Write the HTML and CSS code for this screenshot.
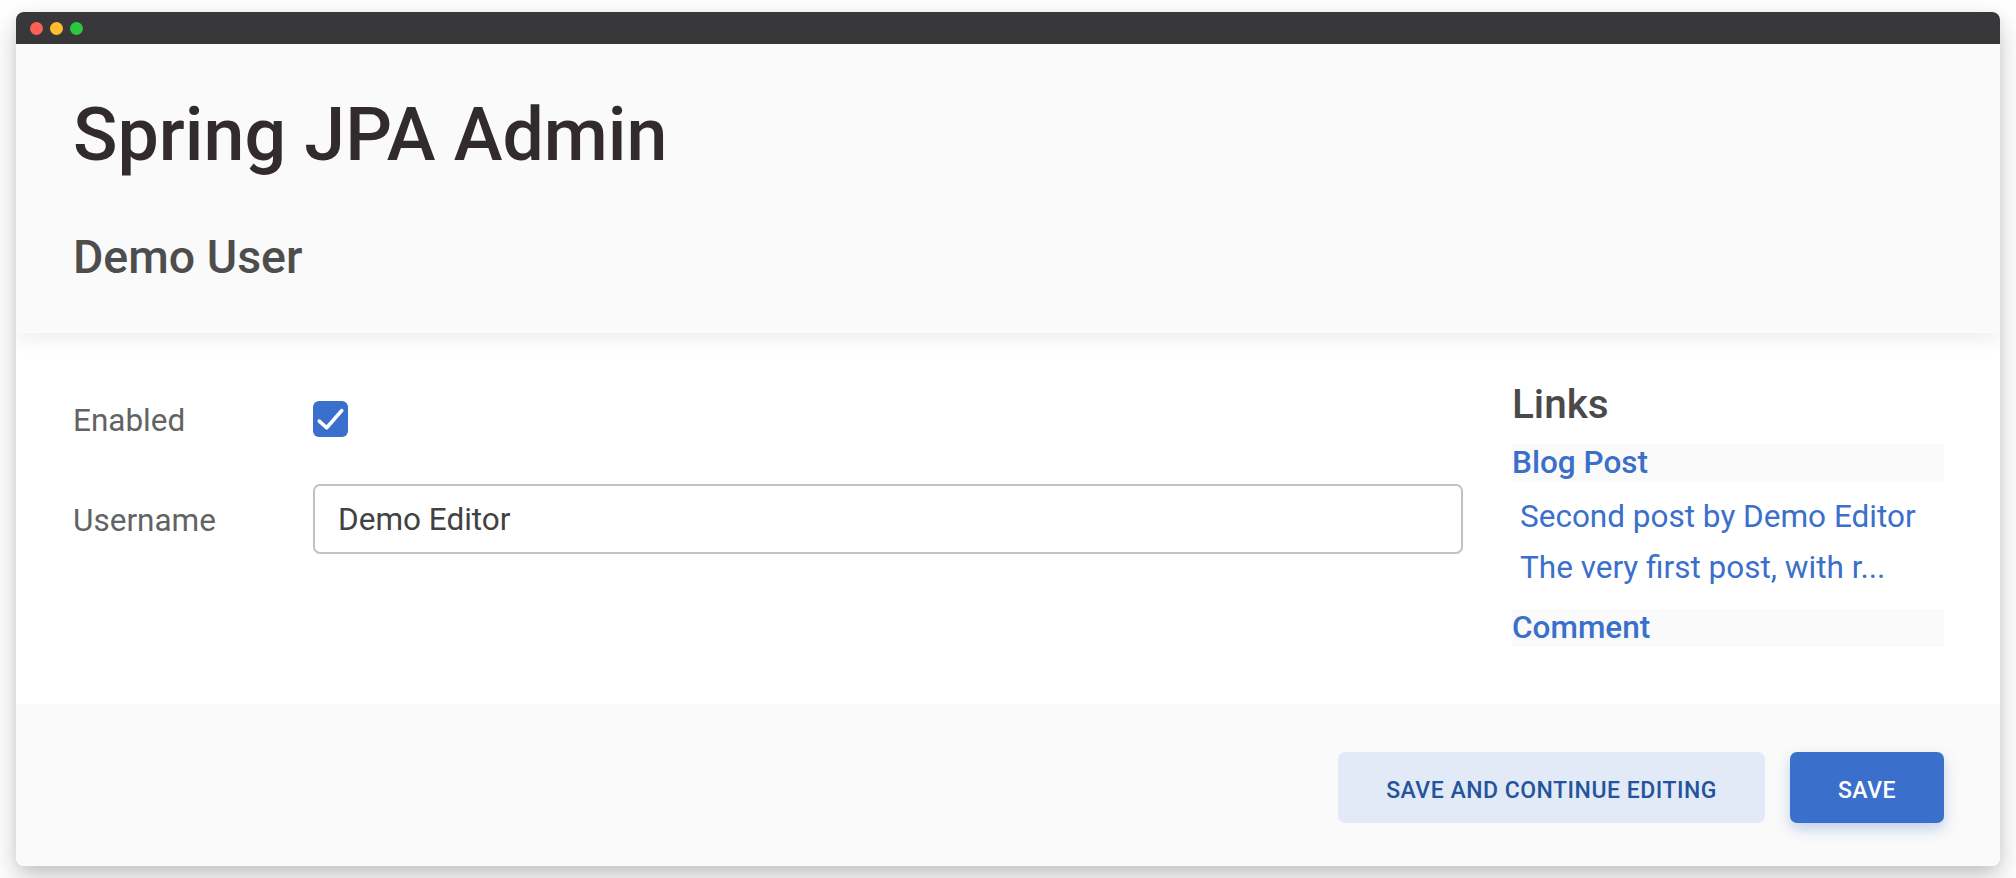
FILE: index.html
```html
<!DOCTYPE html>
<html lang="en">
<head>
<meta charset="utf-8">
<title>Spring JPA Admin</title>
<link rel="stylesheet" href="styles.css">
</head>
<body class="page">
  <div class="window">
    <div class="titlebar">
      <span class="dot dot-red"></span>
      <span class="dot dot-yellow"></span>
      <span class="dot dot-green"></span>
    </div>
    <div class="app">
      <header class="header">
        <h1 class="title">Spring JPA Admin</h1>
        <h2 class="subtitle">Demo User</h2>
      </header>
      <main class="content">
        <form class="form">
          <div class="row">
            <label class="label">Enabled</label>
            <div class="field">
              <span class="checkbox">
                <svg viewBox="0 0 20 20" width="35" height="36"><path d="M3.6 11.2 L7.8 15 L16.4 5.2" fill="none" stroke="#ffffff" stroke-width="2.1" stroke-linecap="round" stroke-linejoin="round"/></svg>
              </span>
            </div>
          </div>
          <div class="row">
            <label class="label">Username</label>
            <div class="field">
              <div class="input">Demo Editor</div>
            </div>
          </div>
        </form>
        <aside class="links">
          <h3 class="links-title">Links</h3>
          <div class="group">
            <div class="group-head">Blog Post</div>
            <ul class="group-list">
              <li class="group-item">Second post by Demo Editor</li>
              <li class="group-item">The very first post, with r...</li>
            </ul>
          </div>
          <div class="group">
            <div class="group-head">Comment</div>
          </div>
        </aside>
      </main>
      <footer class="footer">
        <button class="btn btn-secondary" type="button">Save and continue editing</button>
        <button class="btn btn-primary" type="button">Save</button>
      </footer>
    </div>
  </div>
</body>
</html>
```

FILE: styles.css
```css
* { box-sizing: border-box; }

html, body { margin: 0; padding: 0; }

.page {
  background: #ffffff;
  font-family: Roboto, "Liberation Sans", Arial, sans-serif;
  width: 2016px;
  height: 878px;
  overflow: hidden;
  padding: 12px 16px 0 16px;
}

.window {
  width: 1984px;
  height: 854px;
  border-radius: 8px;
  overflow: hidden;
  box-shadow: 0 12px 28px rgba(0, 0, 0, 0.22), 0 2px 8px rgba(0, 0, 0, 0.06);
  display: flex;
  flex-direction: column;
  background: #ffffff;
}

.titlebar {
  height: 32px;
  background: #38383a;
  display: flex;
  align-items: center;
  gap: 7px;
  padding-left: 14px;
  flex-shrink: 0;
}

.dot {
  width: 13px;
  height: 13px;
  border-radius: 50%;
  display: block;
}
.dot-red { background: #fe5f57; }
.dot-yellow { background: #febc2e; }
.dot-green { background: #28c840; }

.app {
  display: flex;
  flex-direction: column;
  flex: 1;
}

.header {
  height: 289px;
  background: #fafafa;
  padding: 54px 57px 0 57px;
  position: relative;
  z-index: 1;
  box-shadow: 0 6px 18px rgba(0, 0, 0, 0.07);
}

.title {
  margin: 0;
  font-size: 73.5px;
  line-height: 74px;
  font-weight: 500;
  color: #312b2c;
}

.subtitle {
  margin: 62px 0 0 0;
  font-size: 46.5px;
  line-height: 46px;
  font-weight: 500;
  color: #4d4d4d;
}

.content {
  height: 371px;
  background: #ffffff;
  display: flex;
  align-items: flex-start;
  padding: 0 56px 0 57px;
}

.form {
  width: 1390px;
  margin-top: 51px;
  display: flex;
  flex-direction: column;
  gap: 30px;
}

.row {
  display: grid;
  grid-template-columns: 240px 1150px;
  align-items: center;
  height: 70px;
}

.label {
  font-size: 31.5px;
  color: #636363;
  line-height: 40px;
  padding-top: 4px;
}

.field {
  display: flex;
  align-items: center;
}

.checkbox {
  width: 35px;
  height: 36px;
  border-radius: 6px;
  background: #3a70cb;
  display: flex;
  align-items: center;
  justify-content: center;
}

.checkbox svg { display: block; }

.input {
  width: 1150px;
  height: 70px;
  border: 2px solid #c2c2c2;
  border-radius: 7px;
  padding: 0 23px;
  display: flex;
  align-items: center;
  font-size: 31.5px;
  color: #424242;
  background: #ffffff;
}

.links {
  flex: 1;
  margin-left: 49px;
  margin-top: 46px;
}

.links-title {
  margin: 0 0 15px 0;
  font-size: 40.5px;
  line-height: 50px;
  font-weight: 500;
  color: #4a4a4a;
}

.group + .group { margin-top: 16px; }

.group-head {
  height: 38px;
  line-height: 38px;
  background: #fafafa;
  font-size: 31.5px;
  font-weight: 500;
  color: #3a70cb;
}

.group-list {
  list-style: none;
  margin: 9px 0 0 0;
  padding: 0;
}

.group-item {
  padding-left: 8px;
  font-size: 31.5px;
  line-height: 51px;
  color: #3a70cb;
  white-space: nowrap;
}

.footer {
  height: 162px;
  background: #fafafa;
  display: flex;
  justify-content: flex-end;
  align-items: flex-start;
  gap: 25px;
  padding: 48px 56px 0 0;
}

.btn {
  height: 71px;
  padding: 5px 48px 0 48px;
  border: none;
  border-radius: 7px;
  font-family: Roboto, "Liberation Sans", Arial, sans-serif;
  font-size: 23px;
  font-weight: 500;
  letter-spacing: 0.5px;
  text-transform: uppercase;
  cursor: pointer;
}

.btn-secondary {
  background: #e2eaf7;
  color: #24549c;
}

.btn-primary {
  background: #3a70cb;
  color: #ffffff;
  box-shadow: 0 6px 14px rgba(58, 112, 203, 0.3);
}
```
